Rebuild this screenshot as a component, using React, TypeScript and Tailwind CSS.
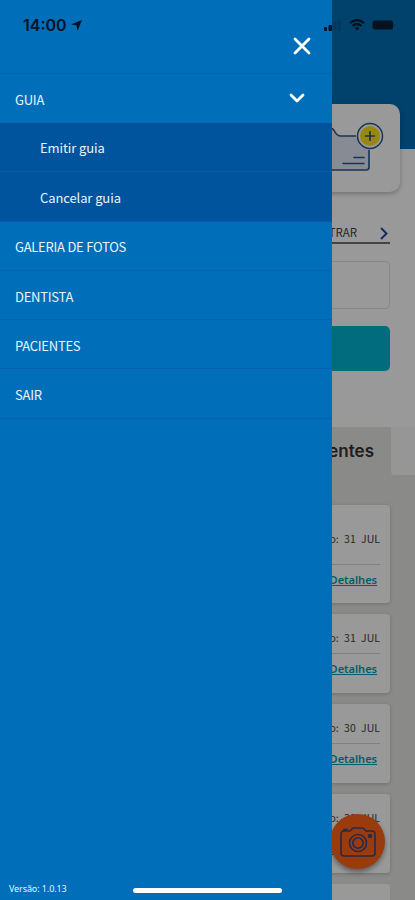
import clsx from "clsx";
import { ChevronDown, X } from "lucide-react";

interface Visit {
  date: string;
  tall?: boolean;
}

const visits: Visit[] = [
  { date: "31 JUL", tall: true },
  { date: "31 JUL" },
  { date: "30 JUL" },
  { date: "30 JUL" },
];

const guiaItems = ["Emitir guia", "Cancelar guia"];
const menuItems = ["GALERIA DE FOTOS", "DENTISTA", "PACIENTES", "SAIR"];

export default function App() {
  return (
    <div className="relative h-[900px] w-[415px] overflow-hidden bg-white font-['Noto_Sans_CJK_SC','Noto_Sans',sans-serif]">
      <HomePage />
      <div className="absolute inset-0 bg-black/40" />
      <Drawer />
      <StatusBar />
      <div className="absolute bottom-[7px] left-[133px] h-[5px] w-[149px] rounded-full bg-white" />
    </div>
  );
}

function HomePage() {
  return (
    <main className="flex h-full flex-col">
      <header className="h-[149px] shrink-0 bg-[#006eb5]" />
      <section className="mx-[15px] -mt-[45px] flex h-[88px] shrink-0 items-start justify-end rounded-[10px] bg-white shadow-[0_2px_5px_rgba(0,0,0,0.25)]">
        <FolderIcon />
      </section>

      <div className="mx-[25px] mt-[30px] flex h-[22px] shrink-0 items-center justify-end border-b-2 border-[#707070] text-[11.5px] text-[#444]">
        <span className="mr-[23px] pt-[2px]">FILTRAR</span>
        <svg
          className="mt-[3px] mr-[2px] h-[13px] w-2"
          viewBox="0 0 8 13"
          fill="none"
          stroke="#254b9e"
          strokeWidth="2"
        >
          <path d="M1 1l5.5 5.5L1 12" />
        </svg>
      </div>
      <div className="mx-[25px] mt-[17px] h-12 shrink-0 rounded border border-[#e3e3e3]" />
      <button className="mx-[25px] mt-[17px] h-[45px] shrink-0 rounded-[5px] bg-[#00b5d0]" />

      <section className="mt-14 flex flex-1 flex-col bg-[#e7e7e4]">
        <div className="flex h-12 shrink-0">
          <h2 className="flex w-[391px] items-center justify-end pt-px pr-[17px] font-['Inter',sans-serif] text-[17px] font-semibold text-[#333]">
            Pacientes
          </h2>
          <div className="flex-1 rounded-bl-[4px] bg-[#fafafa]" />
        </div>
        <div className="mx-[25px] mt-[30px] flex flex-col gap-[11px]">
          {visits.map((visit, i) => (
            <VisitCard key={i} visit={visit} />
          ))}
          <div className="h-20 rounded bg-white" />
        </div>
      </section>
      <CameraButton />
    </main>
  );
}

function VisitCard({ visit }: { visit: Visit }) {
  return (
    <article
      className={clsx(
        "flex shrink-0 flex-col rounded bg-white px-[10px] shadow-[0_1px_4px_rgba(0,0,0,0.2)]",
        visit.tall ? "h-[98px] pt-[20px]" : "h-[79px] pt-[10px]",
      )}
    >
      <p className="flex h-[29px] items-center justify-end pb-px text-[10.5px] [word-spacing:3px] text-[#444]">
        Solicitação: {visit.date}
      </p>
      <div className={clsx("border-t border-[#d8d8d8]", visit.tall && "mt-[10px]")} />
      <a className="mt-[7px] mr-[3px] self-end font-['Noto_Sans',sans-serif] text-[11px] leading-4 font-semibold text-[#009db4] underline">
        Detalhes
      </a>
    </article>
  );
}

function FolderIcon() {
  return (
    <svg className="mt-[14px] mr-[12px] h-[62px] w-[88px]" viewBox="0 0 88 62" fill="none">
      <path d="M2 53V18q0-8 8-8h20q3 0 5 4t5 4h30v34H2" fill="#e1e9f7" />
      <path
        d="M2 53V18q0-8 8-8h20q3 0 5 4t6 4h15M69 32v17q0 3-3 3H2"
        stroke="#28588c"
        strokeWidth="1.6"
      />
      <path d="M54 39.5h10M43 45.5h21" stroke="#28588c" strokeWidth="1.5" strokeLinecap="round" />
      <circle cx="70" cy="18" r="12.5" fill="#fff" stroke="#28588c" strokeWidth="1.5" />
      <circle cx="70" cy="18" r="10" fill="#ffe21e" />
      <path d="M70 13v10M65 18h10" stroke="#28588c" strokeWidth="1.7" />
    </svg>
  );
}

function CameraButton() {
  return (
    <button className="absolute top-[814px] left-[330px] grid size-[55px] place-items-center rounded-full bg-[#ff6317] shadow-[0_3px_5px_rgba(0,0,0,0.4)]">
      <svg className="size-10" viewBox="0 0 40 40" fill="none" stroke="#434477" strokeWidth="1.6">
        <path
          d="M6 9h6l3-3h10l3 3h6q3 0 3 3v19q0 3-3 3H6q-3 0-3-3V12q0-3 3-3Z"
          strokeLinejoin="round"
        />
        <path d="M6 9V7.5h4" />
        <circle cx="20" cy="21" r="8.5" />
        <circle cx="20" cy="21" r="5.2" />
        <circle cx="32" cy="14" r="1.5" fill="#434477" />
      </svg>
    </button>
  );
}

function Drawer() {
  return (
    <nav className="absolute inset-y-0 left-0 flex w-[332px] flex-col bg-[#006eb8] text-[13px] tracking-[-0.25px] text-[#e8f5fd]">
      <div className="flex h-[74px] shrink-0 items-center justify-end border-b border-[#0065ae] pt-[19px] pr-4">
        <X className="size-7 text-white" strokeWidth={2.4} />
      </div>
      <div className="flex h-[49px] shrink-0 items-center justify-between px-[15px]">
        <span className="pt-[2px]">GUIA</span>
        <ChevronDown className="-mt-[2px] mr-[8px] size-6 text-white" strokeWidth={2.8} />
      </div>
      <ul className="bg-[#00539d] tracking-[-0.1px]">
        {guiaItems.map((item) => (
          <li
            key={item}
            className="flex h-[49.3px] items-center border-b border-[#075ba5] pt-[2px] pl-10"
          >
            {item}
          </li>
        ))}
      </ul>
      <ul>
        {menuItems.map((item) => (
          <li
            key={item}
            className="flex h-[49.3px] items-center border-b border-[#0065ae] pt-[3px] pl-[15px]"
          >
            {item}
          </li>
        ))}
      </ul>
      <p className="mt-auto mb-[3px] pl-[9px] font-['Noto_Sans',sans-serif] text-[9px] leading-4 tracking-[-0.1px]">
        Versão: 1.0.13
      </p>
    </nav>
  );
}

function StatusBar() {
  return (
    <div className="absolute inset-x-0 top-[15px] flex h-5 items-center justify-between pr-5 pl-[23px] text-[#06121f]">
      <div className="flex items-center gap-1 font-['Inter',sans-serif] text-[16px] font-semibold">
        14:00
        <svg className="size-[11px]" viewBox="0 0 11 11" fill="currentColor">
          <path d="M11 0 6.5 11 5.5 5.5 0 4.5Z" />
        </svg>
      </div>
      <div className="flex items-center gap-[7px]">
        <svg className="h-[11px] w-[18px]" viewBox="0 0 18 11" fill="currentColor">
          <rect x="0" y="7" width="3" height="4" rx="1" />
          <rect x="4.5" y="5" width="3.5" height="6" rx="1" />
          <rect x="9.5" y="2" width="3" height="9" rx="1" opacity=".2" />
          <rect x="14" y="0" width="3" height="11" rx="1" opacity=".2" />
        </svg>
        <svg
          className="h-[12px] w-[16px]"
          viewBox="0 0 16 12"
          fill="none"
          stroke="currentColor"
          strokeWidth="2.3"
        >
          <path d="M1 4.2Q8-2 15 4.2M3.5 7Q8 3 12.5 7" />
          <path d="M8 11.5 5.5 9Q8 7 10.5 9Z" fill="currentColor" stroke="none" />
        </svg>
        <svg className="h-[10px] w-[23px]" viewBox="0 0 23 10">
          <rect x=".5" y=".5" width="20.5" height="9" rx="2.5" fill="currentColor" />
          <path d="M22 3.5v3" stroke="currentColor" opacity=".5" />
        </svg>
      </div>
    </div>
  );
}
